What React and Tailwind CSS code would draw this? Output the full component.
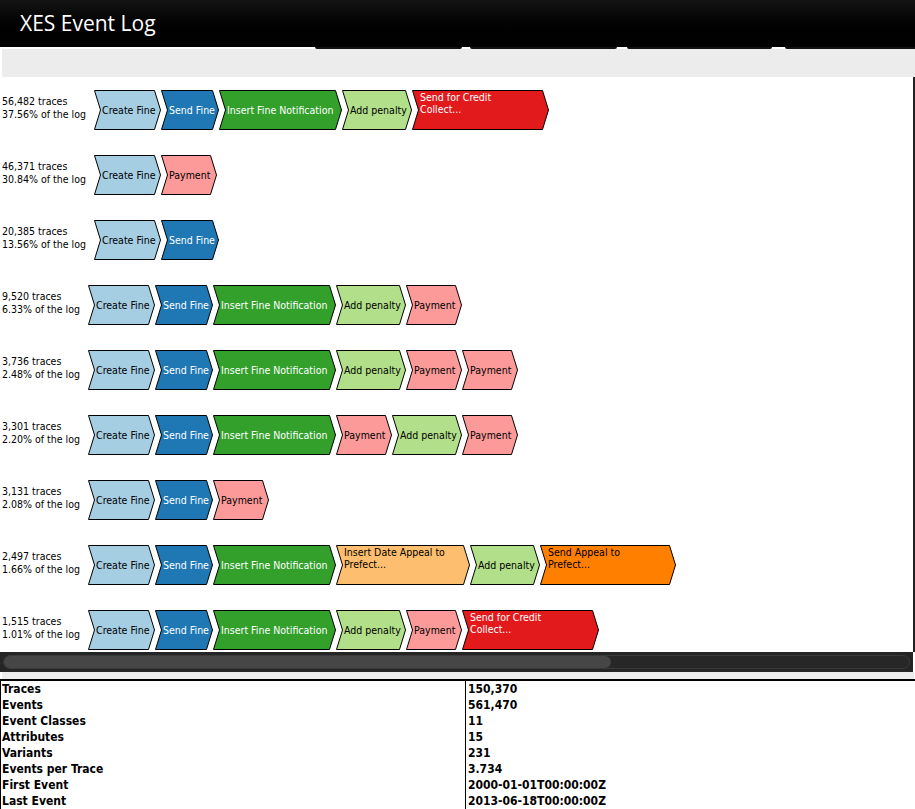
const COLORS = {
  cf: { bg: '#a6cee3', fg: 'text-black', label: ['Create Fine'], w: 67 },
  sf: { bg: '#1f78b4', fg: 'text-white', label: ['Send Fine'], w: 58 },
  ifn: { bg: '#33a02c', fg: 'text-white', label: ['Insert Fine Notification'], w: 123 },
  ap: { bg: '#b2df8a', fg: 'text-black', label: ['Add penalty'], w: 70 },
  pay: { bg: '#fb9a99', fg: 'text-black', label: ['Payment'], w: 56 },
  scc: { bg: '#e31a1c', fg: 'text-white', label: ['Send for Credit', 'Collect...'], w: 137 },
  idap: { bg: '#fdbf6f', fg: 'text-black', label: ['Insert Date Appeal to', 'Prefect...'], w: 134 },
  sap: { bg: '#ff7f00', fg: 'text-black', label: ['Send Appeal to', 'Prefect...'], w: 136 },
}

const variants = [
  { traces: '56,482', pct: '37.56%', steps: ['cf', 'sf', 'ifn', 'ap', 'scc'] },
  { traces: '46,371', pct: '30.84%', steps: ['cf', 'pay'] },
  { traces: '20,385', pct: '13.56%', steps: ['cf', 'sf'] },
  { traces: '9,520', pct: '6.33%', steps: ['cf', 'sf', 'ifn', 'ap', 'pay'] },
  { traces: '3,736', pct: '2.48%', steps: ['cf', 'sf', 'ifn', 'ap', 'pay', 'pay'] },
  { traces: '3,301', pct: '2.20%', steps: ['cf', 'sf', 'ifn', 'pay', 'ap', 'pay'] },
  { traces: '3,131', pct: '2.08%', steps: ['cf', 'sf', 'pay'] },
  { traces: '2,497', pct: '1.66%', steps: ['cf', 'sf', 'ifn', 'idap', 'ap', 'sap'] },
  { traces: '1,515', pct: '1.01%', steps: ['cf', 'sf', 'ifn', 'ap', 'pay', 'scc'] },
]

const stats = [
  ['Traces', '150,370'],
  ['Events', '561,470'],
  ['Event Classes', '11'],
  ['Attributes', '15'],
  ['Variants', '231'],
  ['Events per Trace', '3.734'],
  ['First Event', '2000-01-01T00:00:00Z'],
  ['Last Event', '2013-06-18T00:00:00Z'],
]

const uiFont = { fontFamily: '"DejaVu Sans Condensed", "DejaVu Sans", sans-serif', fontStretch: 'condensed' }

function Chevron({ kind }) {
  const c = COLORS[kind]
  const w = c.w
  const d = 6
  const pts = `0.5,0.5 ${w - d - 0.5},0.5 ${w - 0.5},20 ${w - d - 0.5},39.5 0.5,39.5 ${d + 0.5},20`
  return (
    <div className="relative h-[40px] shrink-0" style={{ width: w }}>
      <svg className="absolute inset-0" width={w} height="40" viewBox={`0 0 ${w} 40`}>
        <polygon points={pts} fill={c.bg} stroke="#000" strokeWidth="1" />
      </svg>
      {c.label.length > 1 ? (
        <div className={`absolute left-[8px] top-[1px] text-[10.5px] leading-[12px] whitespace-nowrap ${c.fg}`}>
          <div>{c.label[0]}</div>
          <div>{c.label[1]}</div>
        </div>
      ) : (
        <div className={`absolute inset-0 flex items-center pl-[8px] pt-[1px] text-[10.5px] whitespace-nowrap ${c.fg}`}>
          {c.label[0]}
        </div>
      )}
    </div>
  )
}

function VariantRow({ v }) {
  return (
    <div className="flex items-center h-[40px]">
      <div className="text-[10.5px] leading-[13px] text-black whitespace-nowrap pl-[2px] pr-[8px] -mt-[4px]">
        <div>{v.traces} traces</div>
        <div>{v.pct} of the log</div>
      </div>
      <div className="flex">
        {v.steps.map((s, i) => (
          <Chevron key={i} kind={s} />
        ))}
      </div>
    </div>
  )
}

export default function App() {
  return (
    <div className="w-[915px] h-[809px] overflow-hidden bg-white" style={uiFont}>
      {/* Title bar */}
      <div className="h-[47px] bg-gradient-to-b from-[#151515] to-black flex items-center pl-[20px]">
        <span
          className="text-white text-[21px]"
          style={{ fontFamily: '"Open Sans", sans-serif', fontStretch: 'normal' }}
        >
          XES Event Log
        </span>
      </div>
      {/* tab edges */}
      <div className="h-[2px] bg-white flex">
        <div className="w-[315px]" />
        <div className="w-[147px] bg-[#111] rounded-b-[2px]" />
        <div className="w-[8px]" />
        <div className="w-[147px] bg-[#111] rounded-b-[2px]" />
        <div className="w-[10px]" />
        <div className="w-[145px] bg-[#111] rounded-b-[2px]" />
        <div className="w-[13px]" />
        <div className="flex-1 bg-[#111] rounded-bl-[2px]" />
      </div>
      <div className="h-[28px] bg-[#ececec] ml-[2px]" />

      {/* Variants */}
      <div className="h-[575px] border-r-2 border-[#222] pt-[13px] flex flex-col gap-[25px] overflow-hidden">
        {variants.map((v, i) => (
          <VariantRow key={i} v={v} />
        ))}
      </div>

      {/* Horizontal scrollbar */}
      <div className="h-[20px] bg-[#252525] mr-[2px] pt-[3px] px-[3px]">
        <div className="h-[14px] rounded-full bg-[#272727] border border-[#3a3a3a] flex">
          <div className="w-[607px] h-full rounded-full bg-[#464646]" />
        </div>
      </div>
      <div className="h-[7px] bg-[#ececec] ml-[2px] mr-[1px]" />

      {/* Summary table */}
      <div className="border-t-2 border-black border-l border-l-black">
        {stats.map(([k, val]) => (
          <div key={k} className="grid grid-cols-[465px_1fr] h-[16px] text-[12px] leading-[16px] font-bold text-black">
            <div className="pl-[1px] border-r border-black">{k}</div>
            <div className="pl-[2px]">{val}</div>
          </div>
        ))}
      </div>
    </div>
  )
}
